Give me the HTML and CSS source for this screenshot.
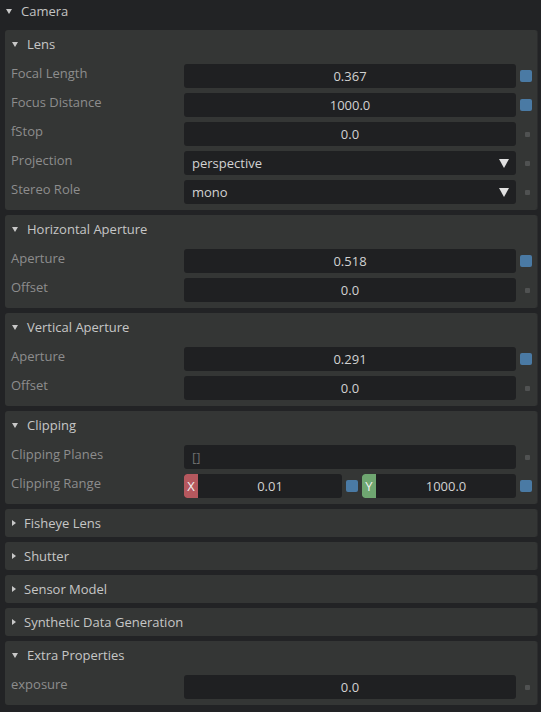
FILE: index.html
```html
<!DOCTYPE html>
<html>
<head>
<meta charset="utf-8">
<link rel="stylesheet" href="styles.css">
</head>
<body>
<div class="root">
  <div class="root-head"><span class="tri-down"></span><span class="root-title">Camera</span></div>

  <section class="panel">
    <div class="panel-head"><span class="tri-down"></span><span class="panel-title">Lens</span></div>
    <div class="rows">
      <div class="row"><span class="label">Focal Length</span><div class="field num">0.367</div><span class="mark on"></span></div>
      <div class="row"><span class="label">Focus Distance</span><div class="field num">1000.0</div><span class="mark on"></span></div>
      <div class="row"><span class="label">fStop</span><div class="field num">0.0</div><span class="mark"></span></div>
      <div class="row"><span class="label">Projection</span><div class="field combo"><span>perspective</span><span class="combo-arrow"></span></div><span class="mark"></span></div>
      <div class="row"><span class="label">Stereo Role</span><div class="field combo"><span>mono</span><span class="combo-arrow"></span></div><span class="mark"></span></div>
    </div>
  </section>

  <section class="panel">
    <div class="panel-head"><span class="tri-down"></span><span class="panel-title">Horizontal Aperture</span></div>
    <div class="rows">
      <div class="row"><span class="label">Aperture</span><div class="field num">0.518</div><span class="mark on"></span></div>
      <div class="row"><span class="label">Offset</span><div class="field num">0.0</div><span class="mark"></span></div>
    </div>
  </section>

  <section class="panel">
    <div class="panel-head"><span class="tri-down"></span><span class="panel-title">Vertical Aperture</span></div>
    <div class="rows">
      <div class="row"><span class="label">Aperture</span><div class="field num">0.291</div><span class="mark on"></span></div>
      <div class="row"><span class="label">Offset</span><div class="field num">0.0</div><span class="mark"></span></div>
    </div>
  </section>

  <section class="panel">
    <div class="panel-head"><span class="tri-down"></span><span class="panel-title">Clipping</span></div>
    <div class="rows">
      <div class="row"><span class="label">Clipping Planes</span><div class="field text"><span class="dim">[]</span></div><span class="mark"></span></div>
      <div class="row"><span class="label">Clipping Range</span>
        <div class="vec">
          <div class="field vec-field"><span class="axis axis-x">X</span><span class="vec-val">0.01</span></div>
          <span class="mark on"></span>
          <div class="field vec-field"><span class="axis axis-y">Y</span><span class="vec-val">1000.0</span></div>
        </div>
        <span class="mark on"></span></div>
    </div>
  </section>

  <section class="panel closed">
    <div class="panel-head"><span class="tri-right"></span><span class="panel-title">Fisheye Lens</span></div>
  </section>
  <section class="panel closed">
    <div class="panel-head"><span class="tri-right"></span><span class="panel-title">Shutter</span></div>
  </section>
  <section class="panel closed">
    <div class="panel-head"><span class="tri-right"></span><span class="panel-title">Sensor Model</span></div>
  </section>
  <section class="panel closed">
    <div class="panel-head"><span class="tri-right"></span><span class="panel-title">Synthetic Data Generation</span></div>
  </section>

  <section class="panel">
    <div class="panel-head"><span class="tri-down"></span><span class="panel-title">Extra Properties</span></div>
    <div class="rows">
      <div class="row"><span class="label">exposure</span><div class="field num">0.0</div><span class="mark"></span></div>
    </div>
  </section>
</div>
</body>
</html>
```

FILE: styles.css
```css
* { box-sizing: border-box; }

html, body {
  margin: 0;
  padding: 0;
  background: #222325;
  height: 100%;
}

body {
  font-family: "Open Sans", "Noto Sans", sans-serif;
  font-size: 13px;
  line-height: 18px;
  color: #cccccc;
  overflow: hidden;
}

.root {
  display: flex;
  flex-direction: column;
  gap: 5px;
  padding: 0 3px 0 5px;
}

.root-head {
  height: 25px;
  display: flex;
  align-items: flex-start;
  padding: 2px 0 0 1px;
}

.root-head .tri-down { margin-top: 7px; }

.root-title {
  margin-left: 9px;
  color: #c4c4c4;
  font-weight: 500;
}

.tri-down {
  width: 0;
  height: 0;
  border-left: 3px solid transparent;
  border-right: 3px solid transparent;
  border-top: 5px solid #c8c8c8;
}

.tri-right {
  width: 0;
  height: 0;
  border-top: 3px solid transparent;
  border-bottom: 3px solid transparent;
  border-left: 4px solid #c8c8c8;
}

.panel {
  background: #343635;
  border-radius: 3px;
  border-right: 1px solid #2b2c2d;
  padding-bottom: 6px;
}

.panel.closed { padding-bottom: 0; }

.panel-head {
  height: 28px;
  display: flex;
  align-items: center;
  padding-left: 7px;
}

.panel-head .tri-down + .panel-title { margin-left: 9px; }
.panel-head .tri-right + .panel-title { margin-left: 8px; }

.panel-title {
  font-weight: 500;
  color: #c6c6c6;
}

.rows {
  display: flex;
  flex-direction: column;
  gap: 5px;
  padding-top: 6px;
}

.row {
  height: 24px;
  display: flex;
  align-items: center;
}

.label {
  align-self: flex-start;
  width: 179px;
  padding-left: 6px;
  color: #8d8d8d;
  flex-shrink: 0;
}

.field {
  width: 332px;
  height: 24px;
  background: #1f2022;
  border-radius: 3px;
  display: flex;
  align-items: center;
  color: #d2d2d2;
  flex-shrink: 0;
}

.field.num { justify-content: center; }

.field.combo {
  justify-content: space-between;
  padding: 0 7px 0 8px;
}

.field.text { padding-left: 8px; }

.dim { color: #6e6e6e; }

.combo-arrow {
  width: 0;
  height: 0;
  border-left: 5px solid transparent;
  border-right: 5px solid transparent;
  border-top: 9px solid #e0e0e0;
}

.mark {
  width: 5px;
  height: 5px;
  margin-left: 9px;
  background: #505252;
  border-radius: 1px;
}

.mark.on {
  width: 12px;
  height: 12px;
  margin-left: 4px;
  background: #4a7aa4;
  border-radius: 2px;
}

.vec {
  width: 332px;
  display: flex;
  align-items: center;
  flex-shrink: 0;
}

.vec-field {
  width: 158px;
  overflow: hidden;
}

.vec .mark.on { margin: 0 4px; }

.vec-field:last-child { width: 154px; }

.axis {
  width: 14px;
  height: 24px;
  display: flex;
  align-items: center;
  justify-content: center;
  color: #f0f0f0;
  flex-shrink: 0;
  border-radius: 3px 0 0 3px;
}

.axis-x { background: #b5585e; }
.axis-y { background: #6fa671; }

.vec-val {
  flex: 1;
  text-align: center;
}
```
